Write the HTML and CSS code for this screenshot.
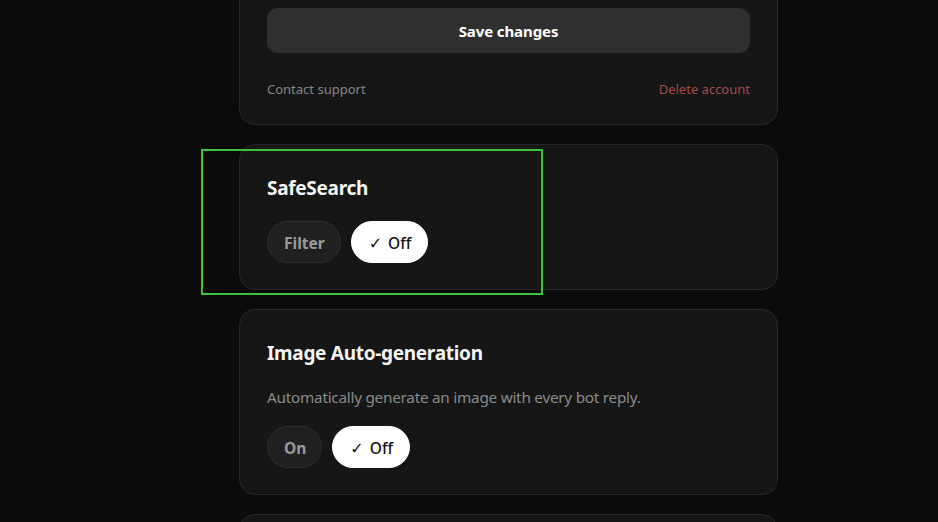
FILE: index.html
```html
<!DOCTYPE html>
<html lang="en">
<head>
<meta charset="utf-8">
<title>Settings</title>
<link rel="stylesheet" href="styles.css">
</head>
<body>
<main class="settings">
  <section class="card account">
    <button class="save">Save changes</button>
    <div class="account-links">
      <a class="link muted">Contact support</a>
      <a class="link danger">Delete account</a>
    </div>
  </section>

  <section class="card safesearch">
    <h2 class="card-title">SafeSearch</h2>
    <div class="choices">
      <button class="pill">Filter</button>
      <button class="pill selected"><span class="check">✓</span>Off</button>
    </div>
    <div class="highlight"></div>
  </section>

  <section class="card">
    <h2 class="card-title">Image Auto-generation</h2>
    <p class="card-desc">Automatically generate an image with every bot reply.</p>
    <div class="choices">
      <button class="pill">On</button>
      <button class="pill selected"><span class="check">✓</span>Off</button>
    </div>
  </section>

  <section class="card"></section>
</main>
</body>
</html>
```

FILE: styles.css
```css
* { box-sizing: border-box; }

html, body {
  margin: 0;
  height: 100%;
  overflow: hidden;
  background: #0b0b0b;
}

body {
  font-family: "Noto Sans", "Open Sans", sans-serif;
  color: #f2f2f2;
}

.settings {
  width: 539px;
  margin-left: 239px;
  margin-top: -39px;
  display: flex;
  flex-direction: column;
  gap: 19px;
}

.card {
  position: relative;
  background: #161616;
  border: 1px solid #272727;
  border-radius: 16px;
  padding: 30px 27px 26px;
}

.account {
  padding-top: 46px;
  padding-bottom: 25px;
}

.save {
  display: block;
  width: 100%;
  height: 45px;
  padding-top: 2px;
  border: none;
  border-radius: 11px;
  background: #2f2f2f;
  color: #ffffff;
  font: 700 15px/1 "Noto Sans", "Open Sans", sans-serif;
  letter-spacing: -0.1px;
}

.account-links {
  display: flex;
  justify-content: space-between;
  margin-top: 26px;
  font-size: 13px;
  line-height: 20px;
}

.link.muted { color: #858585; }
.link.danger { color: #a84a4a; }

.card-title {
  margin: 0;
  font-size: 19px;
  line-height: 26px;
  font-weight: 700;
  color: #f5f5f5;
  letter-spacing: -0.3px;
}

.card-desc {
  margin: 19px 0 0;
  font-size: 15.3px;
  line-height: 24px;
  color: #8a8a8a;
  letter-spacing: -0.25px;
}

.choices {
  display: flex;
  gap: 10px;
  margin-top: 20px;
}

.card-desc + .choices { margin-top: 17px; }

.pill {
  height: 42px;
  padding: 3px 15px 0 16px;
  border-radius: 21px;
  border: 1px solid #2e2e2e;
  background: #202020;
  color: #9a9a9a;
  font: 700 15.5px/1 "Noto Sans", "Open Sans", sans-serif;
  display: flex;
  align-items: center;
}

.pill.selected {
  background: #ffffff;
  border-color: #ffffff;
  color: #111111;
  font-weight: 500;
  padding: 3px 16px 0 17px;
}

.check {
  font-size: 16px;
  margin-right: 6px;
  font-family: "DejaVu Sans", sans-serif;
  font-weight: 400;
}

.highlight {
  position: absolute;
  left: -39px;
  top: 4px;
  width: 342px;
  height: 146px;
  border: 2px solid #3cc33a;
  pointer-events: none;
}
```
